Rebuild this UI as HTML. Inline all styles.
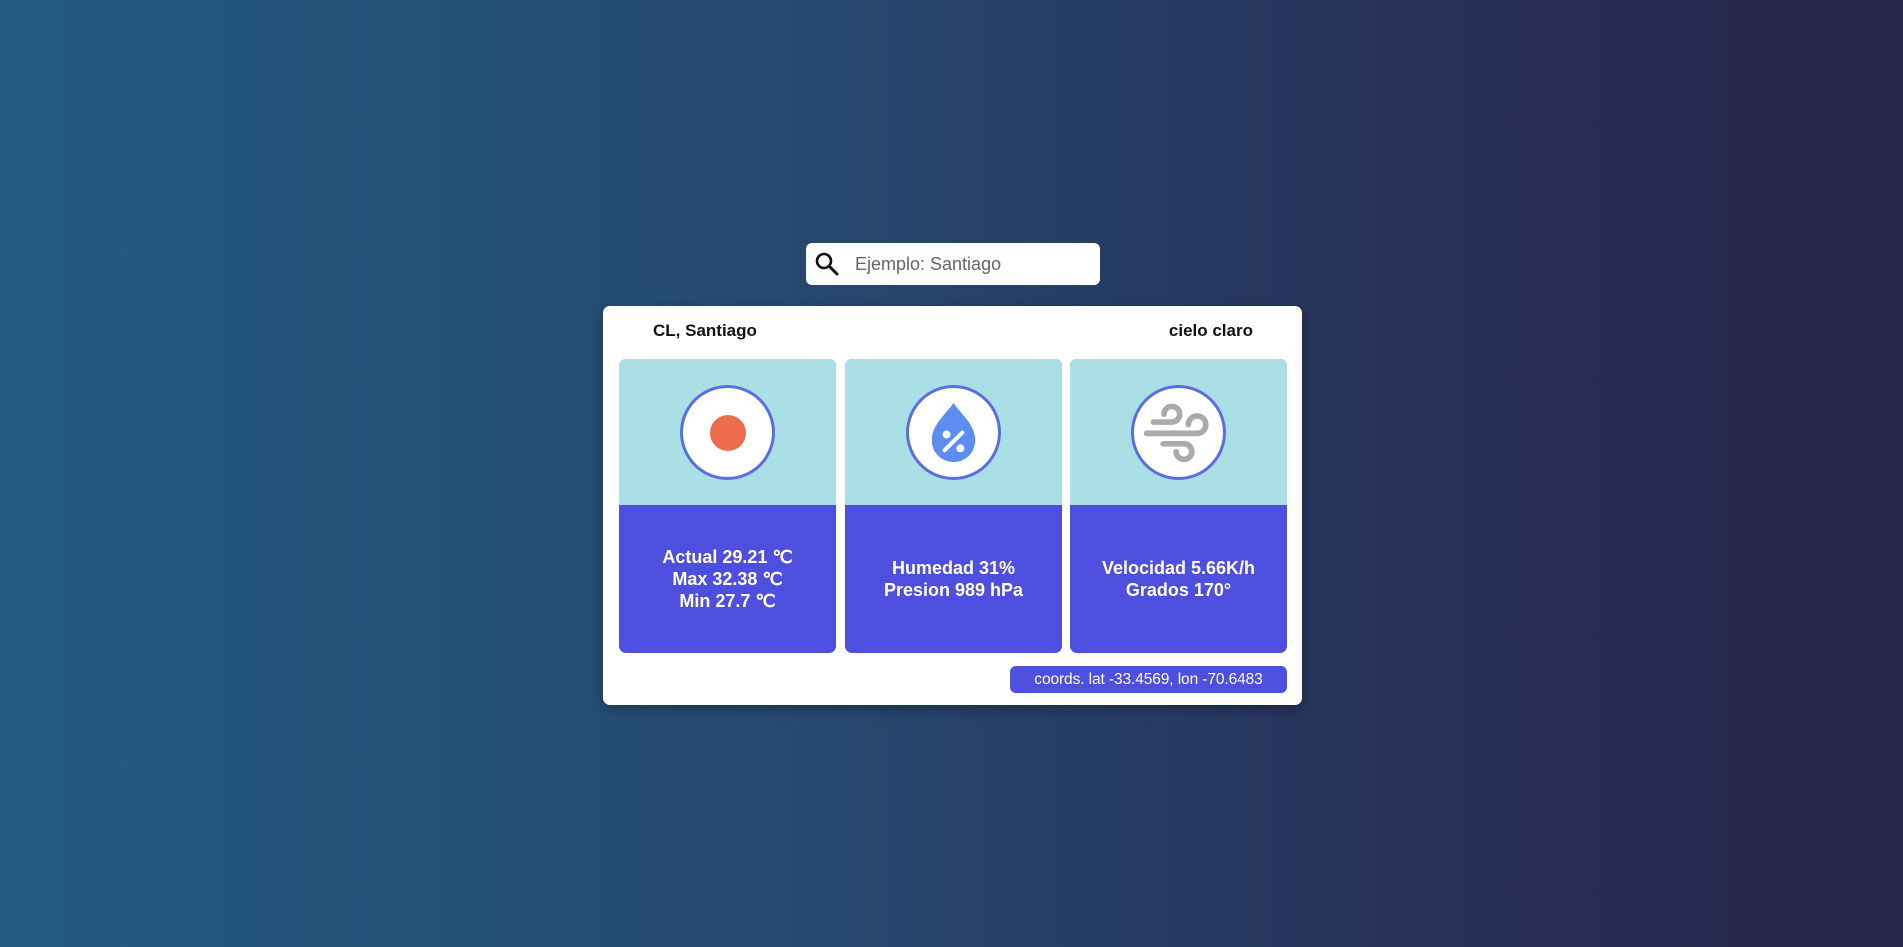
<!DOCTYPE html>
<html><head><meta charset="utf-8"><style>
*{box-sizing:border-box;margin:0;padding:0}
html,body{width:1903px;height:947px;overflow:hidden}
body{background:linear-gradient(90deg,#225a82 0%,#264a70 40%,#272d55 80%,#28254a 100%);font-family:"Liberation Sans",sans-serif;position:relative}
.search{position:absolute;left:806px;top:243px;width:294px;height:42px;background:#fff;border-radius:6px}
.search span{position:absolute;left:49px;top:11px;font-size:18px;color:#666}
.card{position:absolute;left:603px;top:306px;width:699px;height:399px;background:#fff;border-radius:7px;box-shadow:0 4px 12px rgba(0,0,0,.3)}
.h{position:absolute;top:15px;font-size:17px;font-weight:600;color:#111}
.box{position:absolute;top:53px;width:217px;height:294px;border-radius:7px;overflow:hidden;background:#4f4fdf}
.top{height:146px;background:#abdfe6;position:relative}
.circ{position:absolute;left:61px;top:26px;width:95px;height:95px;border-radius:50%;background:#fff;border:3px solid #5b6ee1}
.txt{height:148px;display:flex;align-items:center;justify-content:center;text-align:center;color:#fff;font-weight:bold;font-size:18px;line-height:22px}
.badge{position:absolute;left:407px;top:360px;width:277px;height:27px;background:#4f4fdf;border-radius:6px;color:#fff;font-size:15.5px;font-weight:normal;line-height:27px;text-align:center;letter-spacing:-0.1px}
</style></head><body>
<div class="search">
<svg style="position:absolute;left:8px;top:8px" width="26" height="26" viewBox="0 0 26 26"><circle cx="10" cy="10" r="7" fill="none" stroke="#111" stroke-width="2.6"/><path d="M15 15 L23 23" stroke="#111" stroke-width="3" stroke-linecap="round"/></svg>
<span>Ejemplo: Santiago</span></div>
<div class="card">
<div class="h" style="left:50px">CL, Santiago</div>
<div class="h" style="right:49px">cielo claro</div>
<div class="box" style="left:16px"><div class="top"><div class="circ"><div style="position:absolute;left:26.5px;top:26.5px;width:36px;height:36px;border-radius:50%;background:#ee6c4d"></div></div></div>
<div class="txt">Actual 29.21 ℃<br>Max 32.38 ℃<br>Min 27.7 ℃</div></div>
<div class="box" style="left:242px"><div class="top"><div class="circ"><svg width="89" height="89" viewBox="0 0 90 90"><path d="M45 15 C37 27 23 37 23 53 A22 22 0 0 0 67 53 C67 37 53 27 45 15Z" fill="#5b8ef0"/><circle cx="38" cy="47" r="4" fill="#fff"/><circle cx="52" cy="61" r="4" fill="#fff"/><path d="M36 63 L54 45" stroke="#fff" stroke-width="4" stroke-linecap="round"/></svg></div></div>
<div class="txt">Humedad 31%<br>Presion 989 hPa</div></div>
<div class="box" style="left:467px"><div class="top"><div class="circ"><svg width="89" height="89" viewBox="0 0 90 90" fill="none" stroke="#aaa" stroke-width="6.5" stroke-linecap="round"><g transform="translate(40 45) scale(0.88) translate(-40 -45)"><path d="M17 33 H38 A9 9 0 1 0 29 24"/><path d="M9 46 H67 A10 10 0 1 0 57 36"/><path d="M28 58 H52 A9 9 0 1 1 43 67"/></g></svg></div></div>
<div class="txt">Velocidad 5.66K/h<br>Grados 170°</div></div>
<div class="badge">coords. lat -33.4569, lon -70.6483</div>
</div>
</body></html>
